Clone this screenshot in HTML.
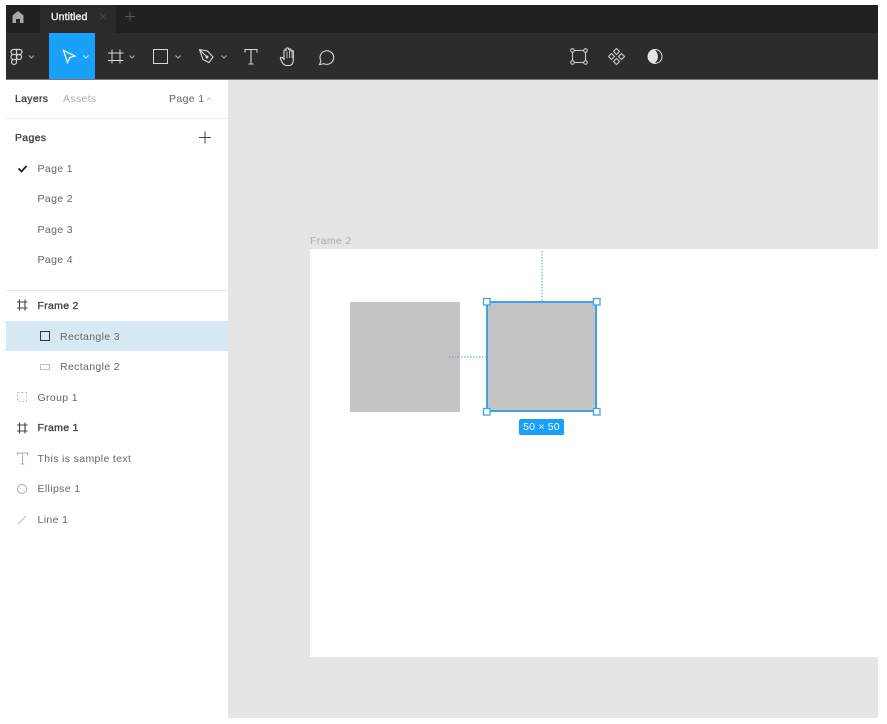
<!DOCTYPE html>
<html>
<head>
<meta charset="utf-8">
<style>
html,body{margin:0;padding:0;width:887px;height:724px;background:#fff;overflow:hidden;font-family:"Liberation Sans",sans-serif}
#r{position:absolute;left:0;top:0;width:887px;height:724px;filter:blur(.35px)}
.a{position:absolute}
.t{position:absolute;font-size:10.500px;line-height:14px;color:#666;white-space:nowrap;letter-spacing:.36px}
.b{color:#444;-webkit-text-stroke:.35px #444;letter-spacing:.3px}
svg{position:absolute;overflow:visible;fill:none}
</style>
</head>
<body>
<div id="r">
<div class="a" style="left:6px;top:5px;width:872px;height:28px;background:#212121"></div>
<div class="a" style="left:40px;top:5px;width:76px;height:28px;background:#2a2a2a"></div>
<div class="a" style="left:6px;top:33px;width:872px;height:46px;background:#2c2c2c"></div>
<div class="a" style="left:6px;top:79px;width:872px;height:1px;background:#777"></div>
<div class="a" style="left:49px;top:33px;width:46px;height:46px;background:#18a0fb"></div>

<svg style="left:0;top:0" width="887" height="80">
<path d="M12.500 23V15.500L18 11l5.500 4.500V23h-3.500v-4h-4v4z" fill="#a8a8a8"/>
<path d="M100 13.500l6 6M106 13.500l-6 6" stroke="#444"/>
<path d="M130 11.500v10M125 16.500h10" stroke="#555"/>
<g stroke="#d0d0d0" stroke-width="1.200">
<path d="M16.500 49.500h-3a2.500 2.500 0 0 0 0 5h3zM16.500 54.500h-3a2.500 2.500 0 0 0 0 5h3zM16.500 59.500h-3a2.500 2.500 0 1 0 3 2.500zM16.500 49.500h3a2.500 2.500 0 0 1 0 5h-3z"/>
<circle cx="19" cy="57" r="2.500"/>
</g>
<g stroke="#aaa" fill="none">
<path d="M29 55.500l2.500 2.500 2.500-2.500"/>
<path d="M129.500 55.500l2.500 2.500 2.500-2.500"/>
<path d="M175.500 55.500l2.500 2.500 2.500-2.500"/>
<path d="M221.500 55.500l2.500 2.500 2.500-2.500"/>
</g>
<path d="M63.500 50.500l11.500 5.500-5 1.500-2.500 5z" stroke="#fff" stroke-width="1.200"/>
<path d="M83.500 55.500l2.500 2.500 2.500-2.500" stroke="#cfeaff"/>
<path d="M112 49.500v14M120 49.500v14M108 53h15.500M108 60.500h15.500" stroke="#d8d8d8"/>
<rect x="153.500" y="49.500" width="14" height="14" stroke="#d8d8d8"/>
<path d="M199.500 49.500l8 1.500 5.500 6-4 5.500-6-3zM199.500 49.500l6.500 6.500" stroke="#d8d8d8" stroke-width="1.100"/>
<circle cx="207" cy="57" r="1.500" fill="#ddd"/>
<path d="M245 52.500v-3h12v3M251 49.500v14.500M248.500 64h5" stroke="#d8d8d8" stroke-width="1.100"/>
<path d="M287 65.500c-3 0-4-1.500-5.500-4.500l-1-2c-.5-1.500 1-2.300 2-1.200l1.500 1.500V51c0-1.500 2-1.500 2 0v-2c0-1.500 2.500-1.500 2.500 0v1c0-1.500 2.500-1.500 2.500 0v1.500c0-1.500 2.300-1.500 2.300 0V60c0 3-1.500 5.500-4 5.500z" stroke="#e0e0e0" stroke-width="1.100"/>
<path d="M287 58.500v-7M289.500 58v-8M292 58v-7" stroke="#e0e0e0" stroke-width=".8"/>
<path d="M319.500 64.500l1.500-3.500a6.800 6.800 0 1 1 3 2.700z" stroke="#d8d8d8" stroke-width="1.100"/>
<g stroke="#ccc" stroke-width="1.100">
<path d="M574 50.500h10M574 62.500h10M572.500 52v9M585.500 52v9"/>
<circle cx="572.500" cy="50.500" r="1.800" fill="#2c2c2c"/><circle cx="585.500" cy="50.500" r="1.800" fill="#2c2c2c"/><circle cx="572.500" cy="62.500" r="1.800" fill="#2c2c2c"/><circle cx="585.500" cy="62.500" r="1.800" fill="#2c2c2c"/>
<path d="M616.500 48.500l3 3-3 3-3-3zM616.500 58.500l3 3-3 3-3-3zM611.500 53.500l3 3-3 3-3-3zM621.500 53.500l3 3-3 3-3-3z"/>
</g>
<circle cx="655" cy="56.500" r="7.500" fill="#e4e4e4"/>
<path d="M655 50a6.500 6.500 0 0 1 0 13c2-2 3-4 3-6.500s-1-4.500-3-6.500z" fill="#2c2c2c"/>
</svg>
<div class="t" style="left:51px;top:10px;color:#eee;-webkit-text-stroke:.4px #eee;letter-spacing:.1px">Untitled</div>

<div class="a" style="left:6px;top:118px;width:222px;height:1px;background:#eee"></div>
<div class="a" style="left:6px;top:290px;width:222px;height:1px;background:#e8e8e8"></div>
<div class="a" style="left:6px;top:321px;width:222px;height:30px;background:#d8e9f6"></div>
<div class="t b" style="left:15px;top:92px">Layers</div>
<div class="t" style="left:63px;top:92px;color:#b0b0b0">Assets</div>
<div class="t" style="left:169px;top:92px">Page 1</div>
<div class="t b" style="left:15px;top:131px">Pages</div>
<div class="t" style="left:37.500px;top:161.500px">Page 1</div>
<div class="t" style="left:37.500px;top:192px">Page 2</div>
<div class="t" style="left:37.500px;top:222.500px">Page 3</div>
<div class="t" style="left:37.500px;top:253px">Page 4</div>
<div class="t b" style="left:37.500px;top:299px">Frame 2</div>
<div class="t" style="left:60px;top:329.500px">Rectangle 3</div>
<div class="t" style="left:60px;top:360px">Rectangle 2</div>
<div class="t" style="left:37.500px;top:390.500px">Group 1</div>
<div class="t b" style="left:37.500px;top:421px">Frame 1</div>
<div class="t" style="left:37.500px;top:451.500px">This is sample text</div>
<div class="t" style="left:37.500px;top:482px">Ellipse 1</div>
<div class="t" style="left:37.500px;top:512.500px">Line 1</div>

<svg style="left:0;top:80px" width="230" height="460">
<path d="M207 20l2-2 2 2" stroke="#ccc"/>
<path d="M205 51.500v12M199 57.500h12" stroke="#444"/>
<path d="M18.500 88.500l3 3 5-5.500" stroke="#222" stroke-width="1.800"/>
<path d="M19.500 219.500v11M25 219.500v11M17 222h10.500M17 228h10.500" stroke="#444" stroke-width="1.100"/>
<rect x="40.500" y="251.500" width="9" height="9" stroke="#334"/>
<rect x="40.500" y="284.500" width="9" height="5" stroke="#c0c0c0"/>
<rect x="17.500" y="312.500" width="9" height="9" stroke="#bbb" stroke-dasharray="2 2"/>
<path d="M19.500 342.500v11M25 342.500v11M17 345h10.500M17 351h10.500" stroke="#444" stroke-width="1.100"/>
<path d="M17.500 375v-2h10v2M22.500 373v11M20.500 384h4" stroke="#aaa"/>
<circle cx="22" cy="409" r="4.500" stroke="#aaa"/>
<path d="M18 444l8-8" stroke="#bbb"/>
</svg>

<div class="a" style="left:228px;top:80px;width:650px;height:638px;background:#e5e5e5"></div>
<div class="a" style="left:310px;top:249px;width:568px;height:408px;background:#fff"></div>
<div class="t" style="left:310px;top:234px;color:#aaa">Frame 2</div>
<div class="a" style="left:350px;top:302px;width:110px;height:110px;background:#c4c4c4"></div>
<div class="a" style="left:486px;top:301px;width:111px;height:111px;background:#c4c4c4;box-sizing:border-box;border:2px solid #3fa2e6"></div>
<svg style="left:0;top:0" width="887" height="724">
<path d="M542 251v50" stroke="#5f9fc4" stroke-dasharray="1.500 1.500"/>
<path d="M449 357h37" stroke="#5f9fc4" stroke-dasharray="1.500 1.500"/>
<g fill="#fff" stroke="#3fa2e6" stroke-width="1.300"><rect x="483.500" y="298.500" width="6.500" height="6.500"/><rect x="593.500" y="298.500" width="6.500" height="6.500"/><rect x="483.500" y="408.500" width="6.500" height="6.500"/><rect x="593.500" y="408.500" width="6.500" height="6.500"/></g>
</svg>
<div class="a" style="left:519px;top:419px;width:45px;height:16px;background:#18a0fb;border-radius:2px;color:#fff;font-size:10.500px;line-height:16px;text-align:center;letter-spacing:.2px">50 × 50</div>
</div>
</body>
</html>
